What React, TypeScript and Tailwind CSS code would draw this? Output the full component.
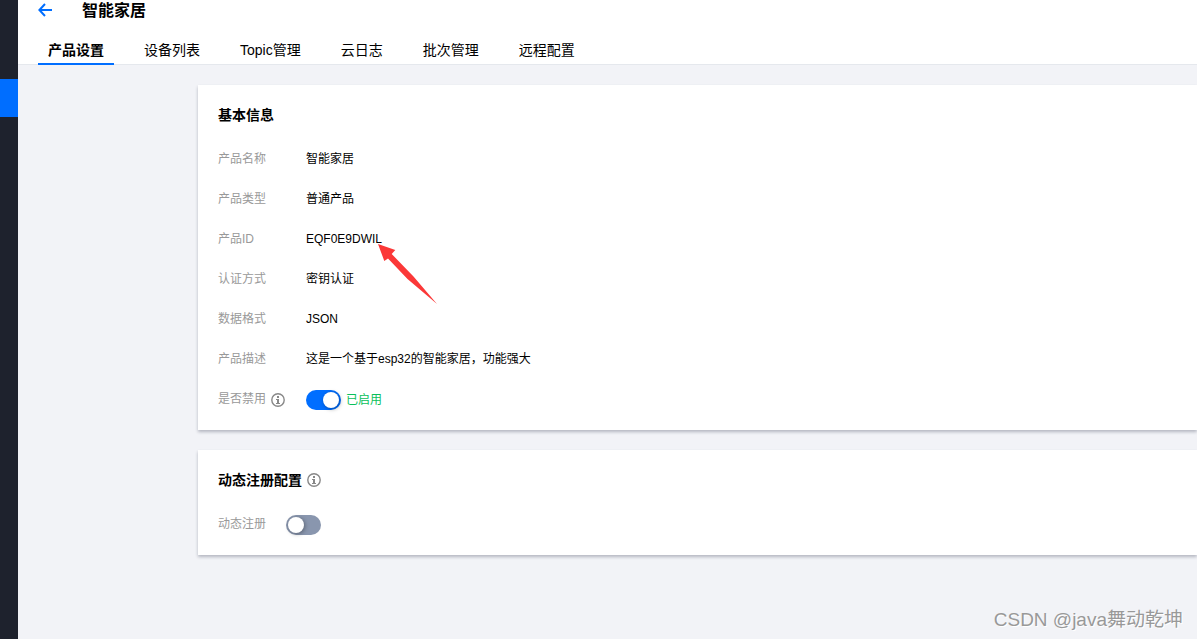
import { useState, type ReactNode } from "react";

const tabs = ["产品设置", "设备列表", "Topic管理", "云日志", "批次管理", "远程配置"];

const fields = [
  { label: "产品名称", value: "智能家居" },
  { label: "产品类型", value: "普通产品" },
  { label: "产品ID", value: "EQF0E9DWIL", pointed: true },
  { label: "认证方式", value: "密钥认证" },
  { label: "数据格式", value: "JSON" },
  { label: "产品描述", value: "这是一个基于esp32的智能家居，功能强大" },
];

function InfoIcon() {
  return (
    <svg viewBox="0 0 14 14" className="size-3.5 shrink-0" fill="none" aria-hidden="true">
      <circle cx="7" cy="7" r="6.2" stroke="#888" strokeWidth="1.4" />
      <path d="M6 3h2v2H6zM5 6h3v4h1v1H5v-1h1V7H5z" fill="#888" />
    </svg>
  );
}

function Pointer() {
  return (
    <svg
      viewBox="0 0 60 62"
      className="pointer-events-none absolute top-3.5 left-[71px] h-[62px] w-[60px]"
      aria-hidden="true"
    >
      <path d="M1 0L18.3 6L14.7 10L36.5 32.5L60 60L30.5 35L11 14.6L7.3 17Z" fill="#fb3838" />
    </svg>
  );
}

function Toggle({ id, initial }: { id: string; initial: boolean }) {
  const [on, setOn] = useState(initial);
  return (
    <input
      id={id}
      type="checkbox"
      role="switch"
      checked={on}
      onChange={() => setOn(!on)}
      className="h-5 w-[35px] shrink-0 cursor-pointer appearance-none rounded-full bg-[#8996ae] p-0.5 before:block before:size-4 before:rounded-full before:bg-white before:shadow-[1px_1px_4px_rgba(0,0,0,0.35)] checked:bg-[#006eff] checked:before:translate-x-[15px]"
    />
  );
}

function Card({ title, children }: { title: ReactNode; children: ReactNode }) {
  return (
    <section className="bg-white p-5 shadow-[0_2px_3px_rgba(54,58,80,0.32)]">
      <h2 className="mb-[25px] flex h-5 items-center gap-[5px] text-sm leading-5 font-bold">{title}</h2>
      {children}
    </section>
  );
}

export default function App() {
  const [active, setActive] = useState(0);
  return (
    <div className="flex min-h-screen overflow-hidden bg-[#f2f3f7] font-['Liberation_Sans','Noto_Sans_CJK_SC',sans-serif] text-xs text-black">
      <aside className="w-[18px] shrink-0 bg-[#1e222d] pt-[79px]">
        <div className="h-[38px] bg-[#006eff]" />
      </aside>
      <div className="flex min-w-0 flex-1 flex-col">
        <header className="border-b border-[#e5e8ed] bg-white px-5">
          <div className="flex h-5 items-center gap-[30px]">
            <button type="button" aria-label="返回" className="cursor-pointer">
              <svg viewBox="0 0 14 14" className="size-3.5" fill="none" stroke="#006eff" strokeWidth="2">
                <path d="M7 1L1.4 7L7 13M1.4 7H14" />
              </svg>
            </button>
            <h1 className="pt-0.5 text-base leading-5 font-bold">智能家居</h1>
          </div>
          <nav className="mt-4 -mb-px flex gap-5">
            {tabs.map((tab, i) => (
              <button
                key={tab}
                type="button"
                onClick={() => setActive(i)}
                className={
                  i === active
                    ? "h-[29px] cursor-pointer border-b-2 border-[#006eff] px-2.5 text-sm leading-5 font-bold"
                    : "h-[29px] cursor-pointer border-b-2 border-transparent px-2.5 text-sm leading-5"
                }
              >
                {tab}
              </button>
            ))}
          </nav>
        </header>
        <main className="flex flex-1 flex-col gap-5 pt-5 pl-[180px]">
          <Card title="基本信息">
            <dl className="flex flex-col gap-5">
              {fields.map((field) => (
                <div key={field.label} className="flex h-5 leading-[18px]">
                  <dt className="w-[88px] shrink-0 text-[#999]">{field.label}</dt>
                  <dd className="relative">
                    {field.value}
                    {field.pointed && <Pointer />}
                  </dd>
                </div>
              ))}
              <div className="flex h-5 leading-[18px]">
                <dt className="flex w-[88px] shrink-0 gap-[5px] text-[#999]">
                  <label htmlFor="enabled">是否禁用</label>
                  <span className="pt-[3px]">
                    <InfoIcon />
                  </span>
                </dt>
                <dd className="flex items-center gap-[5px] text-[#0abf5b]">
                  <Toggle id="enabled" initial={true} />
                  已启用
                </dd>
              </div>
            </dl>
          </Card>
          <Card
            title={
              <>
                动态注册配置
                <InfoIcon />
              </>
            }
          >
            <div className="flex h-5 gap-5 leading-[18px]">
              <label htmlFor="dynamic" className="text-[#999]">
                动态注册
              </label>
              <Toggle id="dynamic" initial={false} />
            </div>
          </Card>
          <footer className="mt-auto self-end pr-3.5 pb-[5px] text-[19px] leading-7 text-[#999] [text-shadow:1px_1px_0_#fff]">
            CSDN @java舞动乾坤
          </footer>
        </main>
      </div>
    </div>
  );
}
